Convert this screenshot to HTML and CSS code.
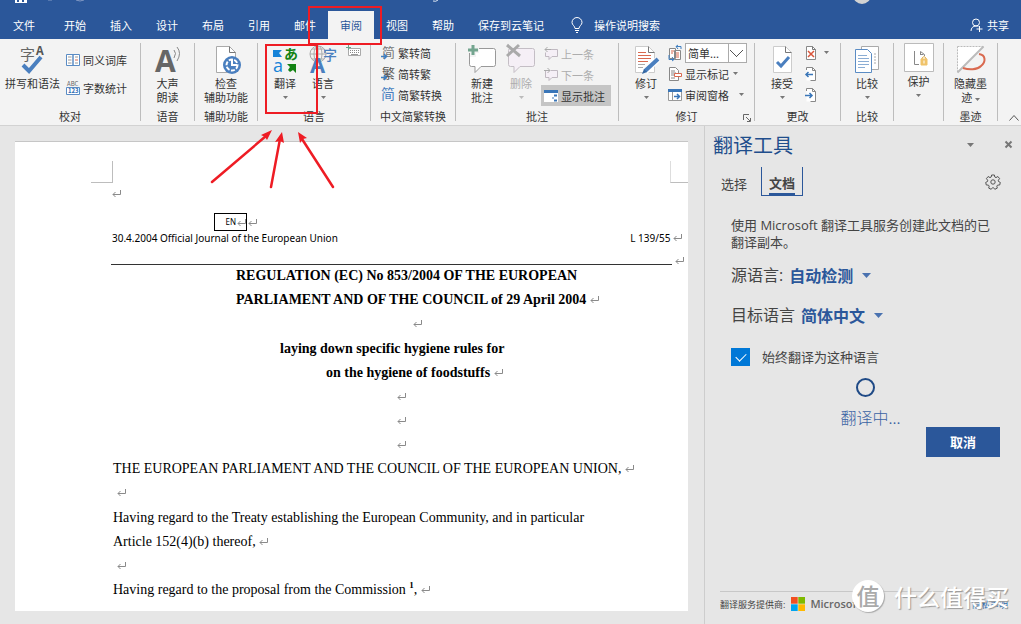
FILE: index.html
```html
<!DOCTYPE html>
<html lang="zh-CN">
<head>
<meta charset="utf-8">
<title>Word - 翻译工具</title>
<link rel="stylesheet" href="styles.css">
</head>
<body>
<svg class="defs" width="0" height="0" aria-hidden="true">
  <symbol id="ret" viewBox="0 0 9 9"><path d="M8.500 1v4.500H1M3.500 3 1 5.500 3.500 8" fill="none" stroke="#8a8a8a"/></symbol>
  <symbol id="caret" viewBox="0 0 5 3"><path d="M0 0h5L2.500 3z" fill="currentColor"/></symbol>
</svg>

<header class="titlebar">
  <svg class="quick" width="900" height="5" aria-hidden="true">
    <path d="M15 0h12v3H15z" fill="#fff"/><path d="M17 0h2v2h-2zM22 0h2v2h-2z" fill="#2b579a"/>
    <path d="M48 0h4M76 0q4 2 8 0" stroke="#8299c4" fill="none"/>
    <path d="M433 1q3 1 5-1" stroke="#dfe7f3" fill="none"/>
    <circle cx="862" cy="-5" r="9" fill="#d2d2d2"/>
  </svg>
  <nav class="tabs">
    <button class="tab file">文件</button>
    <button class="tab">开始</button>
    <button class="tab">插入</button>
    <button class="tab">设计</button>
    <button class="tab">布局</button>
    <button class="tab">引用</button>
    <button class="tab">邮件</button>
    <button class="tab active">审阅</button>
    <button class="tab">视图</button>
    <button class="tab">帮助</button>
    <button class="tab">保存到云笔记</button>
    <button class="tab tell"><svg width="12" height="16" viewBox="0 0 12 16" fill="none" stroke="#fff"><path d="M4 11.500C4 9 1 8 1 5.500a5 5 0 0 1 10 0C11 8 8 9 8 11.500zM4 13.500h4M5 15.500h2"/></svg>操作说明搜索</button>
  </nav>
  <button class="tab share"><svg width="13" height="14" viewBox="0 0 13 14" fill="none" stroke="#fff"><circle cx="6" cy="4.500" r="3.500"/><path d="M1 13c0-3 2-5 5-5 1 0 2 .3 2.500.700M9.500 8v6M6.500 11h6"/></svg>共享</button>
</header>

<section class="ribbon" aria-label="审阅">
  <div class="group g-proof">
    <div class="body">
      <button class="big"><svg class="ico" width="30" height="30" viewBox="0 0 30 30"><text x="2" y="15" font-size="15" fill="#666">字</text><text x="18" y="10" font-size="12" font-weight="700" fill="#555">A</text><path d="m5 20 6 6 12-14" fill="none" stroke="#4a7fbf" stroke-width="4"/></svg><span>拼写和语法</span></button>
      <div class="rows two">
        <button class="small"><svg width="14" height="14" viewBox="0 0 14 14"><path d="M.5 1.500H7v11H.5zM7 1.500h6.500v11H7z" fill="#fff" stroke="#5b8cc4"/><path d="M2 4h3.500M2 7h3.500M2 10h3.500" stroke="#999"/><path d="M9 4h3M9 10h3" stroke="#999"/><path d="M9 7h3" stroke="#d9694f"/></svg>同义词库</button>
        <button class="small"><svg width="14" height="14" viewBox="0 0 14 14"><text x="1" y="5" font-size="6" fill="#666">ABC</text><path d="M.5 6.500h13v7H.5z" fill="#fff" stroke="#5b8cc4"/><text x="2" y="12" font-size="6" font-weight="700" fill="#2f6cb3">123</text></svg>字数统计</button>
      </div>
    </div>
    <div class="label">校对</div>
  </div>
  <div class="group g-speech">
    <div class="body">
      <button class="big"><svg class="ico" width="30" height="30" viewBox="0 0 30 30"><text x="2" y="27" font-size="30" font-weight="700" fill="#666" class="latin">A</text><path d="M21 5q3 3 0 8M24 2q5 6 0 14" fill="none" stroke="#888"/></svg><span>大声<br>朗读</span></button>
    </div>
    <div class="label">语音</div>
  </div>
  <div class="group g-access">
    <div class="body">
      <button class="big"><svg class="ico" width="30" height="30" viewBox="0 0 30 30"><path d="M5.500 1.500h13l6 6v20h-19z" fill="#fff" stroke="#aaa"/><path d="M18.500 1.500v6h6" fill="none" stroke="#777"/><circle cx="21" cy="20" r="9" fill="#4a7fbf"/><circle cx="21" cy="20" r="5.500" fill="none" stroke="#fff" stroke-width="2" stroke-dasharray="4 1.500"/><path d="M21 14v6h5" fill="none" stroke="#fff" stroke-width="2"/></svg><span>检查<br>辅助功能</span></button>
    </div>
    <div class="label">辅助功能</div>
  </div>
  <div class="group g-lang">
    <div class="body">
      <button class="big"><svg class="ico" width="30" height="30" viewBox="0 0 30 30"><path d="M3 5h9L9 8l3 4H3z" fill="#1683d8"/><text x="14" y="14" font-size="14" font-weight="700" fill="#148314">あ</text><text x="3" y="27" font-size="18" fill="#1683d8" class="latin">a</text><path d="M17 19h9v9l-3-3-3 2-2-2 2-3z" fill="#148314"/></svg><span>翻译</span><svg class="caret" width="5" height="3"><use href="#caret"/></svg></button>
      <button class="big"><svg class="ico" width="30" height="30" viewBox="0 0 30 30"><g fill="none" stroke="#aaa"><circle cx="10" cy="9" r="8"/><ellipse cx="10" cy="9" rx="4" ry="8"/><path d="M2 9h16M4 4h12M4 14h12M10 1v16"/></g><text x="15" y="15" font-size="14" font-weight="500" fill="#4a7fbf">字</text><text x="2" y="28" font-size="22" font-weight="700" fill="#4a7fbf" class="latin">A</text></svg><span>语言</span><svg class="caret" width="5" height="3"><use href="#caret"/></svg></button>
      <button class="mini" aria-label="输入法"><svg width="15" height="12" viewBox="0 0 15 12"><path d="M2.500 3.500h12v7h-12z" fill="#fff" stroke="#aaa"/><path d="M4 5.500h9M4 7.500h9" stroke="#888" stroke-dasharray="1 1"/><path d="M5 9.500h7" stroke="#999"/><path d="M0 2.500h5M2.500 0v5" stroke="#6aa58c"/></svg></button>
    </div>
    <div class="label">语言</div>
  </div>
  <div class="group g-conv">
    <div class="body">
      <div class="rows">
        <button class="small"><svg width="14" height="15" viewBox="0 0 14 15"><text x="1" y="12" font-size="13" fill="#777">简</text><path d="M0 11.500h5M3 9l2.500 2.500L3 14" fill="none" stroke="#3f7fc1" stroke-width="1.500"/></svg>繁转简</button>
        <button class="small"><svg width="14" height="15" viewBox="0 0 14 15"><text x="1" y="12" font-size="13" fill="#555">繁</text><path d="M0 11.500h5M3 9l2.500 2.500L3 14" fill="none" stroke="#3f7fc1" stroke-width="1.500"/></svg>简转繁</button>
        <button class="small"><svg width="14" height="15" viewBox="0 0 14 15"><text x="0" y="12" font-size="14" fill="#4a7fbf">简</text></svg>简繁转换</button>
      </div>
    </div>
    <div class="label">中文简繁转换</div>
  </div>
  <div class="group g-comment">
    <div class="body">
      <button class="big"><svg class="ico" width="30" height="30" viewBox="0 0 30 30"><path d="M4.500 3.500h22q2 0 2 2v14q0 2-2 2H14l-6 6v-6H4.500q-2 0-2-2v-14q0-2 2-2z" fill="#fff" stroke="#999"/><path d="M0 5h12M6 0v12" stroke="#f3f3f3" stroke-width="6"/><path d="M1 5h10M6 0v10" stroke="#74a58f" stroke-width="3"/></svg><span>新建<br>批注</span></button>
      <button class="big off" disabled><svg class="ico" width="30" height="30" viewBox="0 0 30 30"><path d="M4.500 3.500h22q2 0 2 2v14q0 2-2 2H14l-6 6v-6H4.500q-2 0-2-2v-14q0-2 2-2z" fill="#f5eff6" stroke="#c4bec5"/><path d="m1 0 13 11M13 0 1 11" stroke="#aaa" stroke-width="3"/></svg><span>删除</span><svg class="caret" width="5" height="3"><use href="#caret"/></svg></button>
      <div class="rows">
        <button class="small off" disabled><svg width="14" height="15" viewBox="0 0 14 15"><path d="M4 3.500h9.500v7H8l-3 3v-3H1.500v-4" fill="#f5eff6" stroke="#c0b9c1"/><path d="M7 3.500H1M3.500 1 1 3.500 3.500 6" fill="none" stroke="#aaa"/></svg>上一条</button>
        <button class="small off" disabled><svg width="14" height="15" viewBox="0 0 14 15"><path d="M7 3.500h6.500v7H8l-3 3v-3H1.500v-7" fill="#f5eff6" stroke="#c0b9c1"/><path d="M0 3.500h6M3.500 1 6 3.500 3.500 6" fill="none" stroke="#aaa"/></svg>下一条</button>
        <button class="small pressed"><svg width="14" height="14" viewBox="0 0 14 14"><path d="M0 1h14v12H0z" fill="#fff"/><path d="M0 1h14v3H0z" fill="#3a76b8"/><path d="M10 6.500h3M10 11.500h3" stroke="#3a76b8" stroke-width="2"/><path d="M8 9h2" stroke="#3a76b8"/></svg>显示批注</button>
      </div>
    </div>
    <div class="label">批注</div>
  </div>
  <div class="group g-track">
    <div class="body">
      <button class="big"><svg class="ico" width="30" height="30" viewBox="0 0 30 30"><path d="M4.500 1.500h13l6 6v20h-19z" fill="#fff" stroke="#ccc"/><path d="M17.500 1.500v6h6" fill="none" stroke="#777"/><path d="M7 7.500h8M7 10.500h13M7 13.500h13M7 16.500h10" stroke="#d9694f"/><path d="M7 19.500h7M7 22.500h5" stroke="#aaa"/><path d="m14 27 13-13" stroke="#fff" stroke-width="6"/><path d="m14 26 13-12" stroke="#4a7fbf" stroke-width="4"/><path d="m11 29 2-5 3 3z" fill="#3568a3"/></svg><span>修订</span><svg class="caret" width="5" height="3"><use href="#caret"/></svg></button>
      <div class="rows">
        <div class="small combo"><svg width="14" height="16" viewBox="0 0 14 16"><path d="M1.500 3.500h6v10h-6zM6.500 5.500h6v9h-6z" fill="#fff" stroke="#888"/><path d="M3 6h3M3 8h2M8 8h3M8 10h3M8 12h3" stroke="#d9694f"/><path d="M13 4V1.500H8M10 0 8 1.500 10 4M1 10v4.500h5M4 12l2 2.500L4 16" fill="none" stroke="#3f7fc1"/></svg><select aria-label="显示以供审阅"><option>简单...</option></select></div>
        <button class="small"><svg width="14" height="14" viewBox="0 0 14 14"><path d="M1.500.5h6l3 3v10h-9z" fill="#fff" stroke="#888"/><path d="M3 4h4M3 6h5M3 8h3M3 11h4" stroke="#888"/><path d="M6.500 6.500h7v3h-7z" fill="#fff" stroke="#d9694f"/></svg>显示标记<svg class="caret" width="5" height="3"><use href="#caret"/></svg></button>
        <button class="small wide"><svg width="14" height="14" viewBox="0 0 14 14"><path d="M.5 2.500h13v10H.5z" fill="#fff" stroke="#999"/><path d="M0 1h14v3H0z" fill="#3a76b8"/><path d="M4.500 4v9" stroke="#999"/><path d="M6 8.500h5M9 6l2.500 2.500L9 11" fill="none" stroke="#3a76b8" stroke-width="1.500"/></svg>审阅窗格<svg class="caret" width="5" height="3"><use href="#caret"/></svg></button>
      </div>
    </div>
    <div class="label">修订<button class="launch" aria-label="修订选项"><svg width="8" height="8" viewBox="0 0 8 8" fill="none" stroke="#666"><path d="M.5 6V.5H6M3 3l4 4M7.500 4v3.500H4"/></svg></button></div>
  </div>
  <div class="group g-change">
    <div class="body">
      <button class="big"><svg class="ico" width="30" height="30" viewBox="0 0 30 30"><path d="M6.500 1.500h12l6 6v20h-18z" fill="#fff" stroke="#ccc"/><path d="M18.500 1.500v6h6" fill="none" stroke="#777"/><path d="m10 17 4 4 8-9" fill="none" stroke="#4a7fbf" stroke-width="3"/></svg><span>接受</span><svg class="caret" width="5" height="3"><use href="#caret"/></svg></button>
      <div class="rows">
        <button class="small reject" aria-label="拒绝"><svg width="12" height="14" viewBox="0 0 12 14"><path d="M1.500.5h6l3 3v10h-9z" fill="#fff" stroke="#888"/><path d="M7.500.5v3h3" fill="none" stroke="#777"/><path d="m3 5 6 6M9 5l-6 6" stroke="#d9553b" stroke-width="1.500"/></svg><svg class="caret" width="5" height="3"><use href="#caret"/></svg></button>
        <button class="small" aria-label="上一处"><svg width="12" height="14" viewBox="0 0 12 14"><path d="M1.500.5h6l3 3v10h-9z" fill="#fff"/><path d="M1.500 3V.5h6l3 3v10h-5M7.500.5v3h3" fill="none" stroke="#888"/><path d="M8 7.500H1M3.500 5 1 7.500 3.500 10" fill="none" stroke="#3a76b8" stroke-width="1.500"/></svg></button>
        <button class="small" aria-label="下一处"><svg width="12" height="14" viewBox="0 0 12 14"><path d="M1.500.5h6l3 3v10h-9z" fill="#fff"/><path d="M1.500 3V.5h6l3 3v10h-5M7.500.5v3h3" fill="none" stroke="#888"/><path d="M0 7.500h7M4.500 5 7 7.500 4.500 10" fill="none" stroke="#3a76b8" stroke-width="1.500"/></svg></button>
      </div>
    </div>
    <div class="label">更改</div>
  </div>
  <div class="group g-compare">
    <div class="body">
      <button class="big"><svg class="ico" width="30" height="30" viewBox="0 0 30 30"><path d="M9.500 1.500h17v23h-17z" fill="#fff" stroke="#aaa"/><path d="M24 9h-2M24 12h-2M24 15h-2M24 18h-2" stroke="#aaa"/><path d="M3.500 4.500h12l4 4v19h-16z" fill="#fff" stroke="#5b8cc4"/><path d="M6 10.500h9M6 13.500h11M6 16.500h11M6 19.500h11M6 22.500h7" stroke="#8badd4"/></svg><span>比较</span><svg class="caret" width="5" height="3"><use href="#caret"/></svg></button>
    </div>
    <div class="label">比较</div>
  </div>
  <div class="group g-protect">
    <div class="body">
      <button class="big"><svg class="frame" width="30" height="29" viewBox="0 0 30 29"><path d="M.5.5h29v28H.5z" fill="#fff" stroke="#bbb"/><path d="M10.500 8v13.500H15M16.500 12V8.500l4 3v1.500M16.500 11.500h3" fill="none" stroke="#888"/><path d="M17 16h6v6h-6z" fill="#f0c36a" stroke="#f0c36a"/><path d="M18 16v-1q2-3 4 0v1" fill="none" stroke="#e0ae4c"/><path d="M20 17.500v3" stroke="#fff"/></svg><span>保护</span><svg class="caret" width="5" height="3"><use href="#caret"/></svg></button>
    </div>
  </div>
  <div class="group g-ink">
    <div class="body">
      <button class="big"><svg class="ico" width="30" height="30" viewBox="0 0 30 30"><path d="M1.500 1.500h26l-26 26z" fill="#fff" stroke="#bbb" stroke-dasharray="2 1"/><path d="M27.500 1.500 1.500 27.500" stroke="#bbb" stroke-width="2"/><path d="M23 9c7 1 7 8 2 12-4 4-12 4-18 2" fill="none" stroke="#d9694f" stroke-width="2"/></svg><span>隐藏墨<br>迹 <svg class="inline" width="5" height="3"><use href="#caret"/></svg></span></button>
    </div>
    <div class="label">墨迹</div>
  </div>
  <button class="collapse" aria-label="折叠功能区"><svg width="10" height="6" viewBox="0 0 10 6"><path d="m.5 5.500 4.500-5 4.500 5" fill="none" stroke="#555"/></svg></button>
</section>

<main class="work">
  <div class="canvas">
    <article class="page">
      <div class="corners"><span class="crop left"></span><span class="crop right"></span></div>
      <p class="blank"><svg class="ret" width="9" height="9"><use href="#ret"/></svg></p>
      <div class="lang-row"><span class="lang">EN<svg width="9" height="9"><use href="#ret"/></svg></span><svg width="9" height="9"><use href="#ret"/></svg></div>
      <div class="running"><span>30.4.2004 Official Journal of the European Union</span><span>L 139/55 <svg class="ret" width="9" height="9"><use href="#ret"/></svg></span></div>
      <div class="rule"><hr><svg width="9" height="9"><use href="#ret"/></svg></div>
      <div class="text">
        <h1 class="in-a">REGULATION (EC) No 853/2004 OF THE EUROPEAN</h1>
        <h1 class="in-a">PARLIAMENT AND OF THE COUNCIL of 29 April 2004 <svg class="ret" width="9" height="9"><use href="#ret"/></svg></h1>
        <p class="in-e end"><svg class="ret" width="9" height="9"><use href="#ret"/></svg></p>
        <h2 class="in-b">laying down specific hygiene rules for</h2>
        <h2 class="in-c">on the hygiene of foodstuffs <svg class="ret" width="9" height="9"><use href="#ret"/></svg></h2>
        <p class="in-d"><svg class="ret" width="9" height="9"><use href="#ret"/></svg></p>
        <p class="in-d"><svg class="ret" width="9" height="9"><use href="#ret"/></svg></p>
        <p class="in-d"><svg class="ret" width="9" height="9"><use href="#ret"/></svg></p>
        <p>THE EUROPEAN PARLIAMENT AND THE COUNCIL OF THE EUROPEAN UNION, <svg class="ret" width="9" height="9"><use href="#ret"/></svg></p>
        <p class="end">&nbsp;<svg class="ret" width="9" height="9"><use href="#ret"/></svg></p>
        <p>Having regard to the Treaty establishing the European Community, and in particular<br>Article 152(4)(b) thereof, <svg class="ret" width="9" height="9"><use href="#ret"/></svg></p>
        <p>&nbsp;<svg class="ret" width="9" height="9"><use href="#ret"/></svg></p>
        <p>Having regard to the proposal from the Commission <sup>1</sup>, <svg class="ret" width="9" height="9"><use href="#ret"/></svg></p>
      </div>
    </article>
  </div>

  <aside class="pane">
    <div class="pane-head">
      <h2>翻译工具</h2>
      <button aria-label="任务窗格选项"><svg width="7" height="4" viewBox="0 0 7 4"><path d="M0 0h7L3.500 4z" fill="#777"/></svg></button>
      <button aria-label="关闭"><svg width="7" height="7" viewBox="0 0 7 7"><path d="m.5.5 6 6M6.500.5l-6 6" stroke="#777" stroke-width="2"/></svg></button>
    </div>
    <div class="pane-tabs">
      <button class="ptab">选择</button>
      <button class="ptab on"><span>文档</span></button>
      <button class="gear" aria-label="设置"><svg width="16" height="16" viewBox="0 0 16 16" fill="none" stroke="#555"><path d="M6.600 1h2.800l.4 2 1.200.600 1.900-1.100 1.700 2.200-1.300 1.500.2 1.300 1.800.9-.6 2.600-2.100.1-.8 1 .5 2-2.500 1.200-1.300-1.600H7.500l-1.300 1.600-2.500-1.200.5-2-.8-1-2.100-.1-.6-2.600 1.800-.9.2-1.300L1.400 4.700l1.700-2.200L5 3.600 6.200 3z"/><circle cx="8" cy="8" r="2.200"/></svg></button>
    </div>
    <div class="pane-body">
      <p class="intro">使用 Microsoft 翻译工具服务创建此文档的已翻译副本。</p>
      <div class="field"><label for="src">源语言:</label><select id="src"><option>自动检测</option></select><svg width="9" height="5" viewBox="0 0 9 5"><path d="M0 0h9L4.500 5z" fill="#4a72b0"/></svg></div>
      <div class="field"><label for="dst">目标语言</label><select id="dst"><option>简体中文</option></select><svg width="9" height="5" viewBox="0 0 9 5"><path d="M0 0h9L4.500 5z" fill="#4a72b0"/></svg></div>
      <label class="check"><input type="checkbox" checked>始终翻译为这种语言</label>
      <div class="busy"><i class="ring"></i><span>翻译中...</span></div>
      <button class="cancel">取消</button>
    </div>
    <footer class="pane-foot">
      <span>翻译服务提供商:</span>
      <svg width="14" height="14" viewBox="0 0 14 14"><path d="M0 0h6.700v6.700H0z" fill="#f25022"/><path d="M7.300 0H14v6.700H7.300z" fill="#7fba00"/><path d="M0 7.300h6.700V14H0z" fill="#00a4ef"/><path d="M7.300 7.300H14V14H7.300z" fill="#ffb900"/></svg>
      <b>Microsoft</b>
      <a href="#privacy">隐私声明</a>
    </footer>
    <div class="mark"><span class="seal">值</span><span>什么值得买</span></div>
  </aside>
</main>

<svg class="notes" width="400" height="200" viewBox="0 0 400 200" fill="none" stroke="#ee1c24" stroke-width="2" aria-hidden="true">
  <path d="M309 7h72v37h-72zM266 45h51v68h-51z"/>
  <g stroke-width="2.500" stroke-linecap="round"><path d="m212 182 54-46M271 187l9-48M333 187l-31-48"/></g>
  <g fill="#ee1c24" stroke="none"><path d="m272 130-5 10-2-3-4-2zM282 132l2 11-4-2-5 1zM298 132l9 6-4 1-3 4z"/></g>
</svg>
</body>
</html>
```
FILE: styles.css
```css
* { box-sizing: border-box; }
body {
  margin: 0;
  height: 100vh;
  display: flex;
  flex-direction: column;
  overflow: hidden;
  background: #e6e6e6;
  color: #333;
  font: 11px/14px "Noto Sans CJK SC", sans-serif;
}
button {
  margin: 0; padding: 0; border: 0;
  background: none; color: inherit; font: inherit;
  white-space: nowrap;
}
svg { display: block; flex: none; overflow: visible; }
h1, h2, p { margin: 0; }
.defs, .notes { position: absolute; left: 0; top: 0; pointer-events: none; }
.latin { font-family: "Open Sans", sans-serif; }

/* title bar and tabs */
.titlebar {
  position: relative;
  display: flex;
  align-items: flex-end;
  justify-content: space-between;
  height: 39px;
  flex: none;
  background: #2b579a;
  color: #fff;
}
.quick { position: absolute; left: 0; top: 0; overflow: hidden; }
.tabs { display: flex; padding-left: 1px; }
.tab { display: flex; align-items: center; height: 28px; padding: 0 12px; }
.file { margin-right: 5px; }
.active { background: #f3f3f3; color: #2b579a; }
.tell { gap: 11px; padding-left: 15px; }
.share { gap: 4px; }

/* ribbon */
.ribbon {
  display: flex;
  flex: none;
  height: 87px;
  padding-top: 4px;
  background: #f3f3f3;
  border-bottom: 1px solid #d2d2d2;
}
.group { height: 78px; border-right: 1px solid #bdbdbd; flex: none; }
.body { display: flex; height: 66px; }
.label { position: relative; text-align: center; }
.launch { position: absolute; right: 3px; top: 5px; }
.big { display: flex; flex-direction: column; align-items: center; line-height: 14px; }
.ico { margin: 2px 0 1px; }
.frame { margin-bottom: 2px; }
.caret { color: #777; }
.big .caret { margin-top: 6px; }
.inline { display: inline-block; vertical-align: middle; color: #777; }
.rows { display: flex; flex-direction: column; }
.small { display: flex; align-items: center; gap: 3px; height: 21px; }
.small .caret { margin-left: 1px; }
.wide .caret { margin-left: 7px; }
.two { padding-top: 3px; }
.two .small { height: 28px; }
.off { color: #adadad; }
.off .caret { color: #bbb; }
.pressed { background: #c5c5c5; }
.mini { align-self: flex-start; padding-top: 2px; }

.g-proof { width: 141px; }
.g-proof .body { padding-left: 5px; gap: 6px; }
.g-speech { width: 54px; }
.g-access { width: 63px; }
.g-speech .body, .g-access .body, .g-compare .body, .g-protect .body, .g-ink .body { justify-content: center; }
.g-lang { width: 113px; }
.g-lang .body { padding-left: 12px; gap: 8px; }
.g-conv { width: 85px; }
.g-conv .body { padding-left: 10px; }
.g-conv .rows, .g-track .rows { margin-top: -1px; }
.g-comment { width: 163px; }
.g-comment .body { padding-left: 11px; gap: 9px; }
.g-comment .rows { margin-left: -4px; }
.g-comment .small { padding: 0 6px 0 3px; }
.g-track { width: 136px; }
.g-track .body { padding-left: 12px; gap: 7px; }
.combo select {
  width: 62px;
  height: 20px;
  padding: 0 2px;
  border: 1px solid #ababab;
  border-radius: 0;
  appearance: none;
  color: #333;
  font: inherit;
  background:
    linear-gradient(45deg, transparent 44%, #555 44%, #555 56%, transparent 56%) 44px 6px / 7px 7px no-repeat,
    linear-gradient(-45deg, transparent 44%, #555 44%, #555 56%, transparent 56%) 50px 6px / 7px 7px no-repeat,
    linear-gradient(#ababab, #ababab) 42px 0 / 1px 20px no-repeat,
    #fff;
}
.g-change { width: 86px; }
.g-change .body { padding-left: 12px; gap: 8px; }
.g-change .rows { margin-top: -1px; }
.reject .caret { margin-left: 4px; }
.g-compare { width: 53px; }
.g-protect { width: 50px; }
.g-ink { width: 54px; }
.collapse { margin-left: auto; align-self: flex-end; padding: 0 2px 4px; }

/* document */
.work { display: flex; flex: 1; min-height: 0; }
.canvas { flex: 1; min-width: 0; padding: 15px 16px 13px 15px; }
.page {
  height: 100%;
  overflow: hidden;
  border-top: 1px solid #c6c6c6;
  background: #fff;
  color: #000;
}
.corners { display: flex; justify-content: space-between; padding-top: 19px; }
.crop { width: 22px; height: 22px; border-bottom: 1px solid #bdbdbd; }
.left { margin-left: 76px; border-right: 1px solid #bdbdbd; }
.right { width: 18px; border-left: 1px solid #ddd; }
.ret { display: inline-block; vertical-align: baseline; }
.blank { padding: 3px 0 0 97px; height: 30px; }
.lang-row { display: flex; align-items: center; padding-left: 199px; gap: 1px; height: 18px; }
.lang {
  display: flex;
  align-items: center;
  justify-content: flex-end;
  gap: 1px;
  width: 33px;
  height: 18px;
  border: 1px solid #000;
  font: 8px/12px "Noto Sans", sans-serif;
}
.running {
  display: flex;
  justify-content: space-between;
  padding: 0 6px 0 97px;
  font: 10px/14px "Noto Sans", sans-serif;
}
.rule { display: flex; align-items: flex-start; gap: 3px; padding: 11px 4px 0 96px; }
.rule hr { flex: 1; height: 1px; margin: 8px 0 0; border: 0; background: #333; }
.text { margin-top: -1px; padding-left: 98px; font: 14px/24px "Liberation Serif", serif; white-space: nowrap; }
.text h1, .text h2 { font-size: 14px; font-weight: 700; }
.end { margin-bottom: 1px; }
.in-a { padding-left: 123px; }
.in-b { padding-left: 167px; }
.in-c { padding-left: 213px; }
.in-d { padding-left: 284px; }
.in-e { padding-left: 300px; }
.text sup { font-size: 9px; font-weight: 700; line-height: 0; }

/* translator pane */
.pane {
  position: relative;
  display: flex;
  flex-direction: column;
  width: 317px;
  flex: none;
  border-left: 1px solid #cdcdcd;
  color: #444;
  font: 13px/17px "Open Sans", "Noto Sans CJK SC", sans-serif;
}
.pane-head { display: flex; align-items: center; gap: 31px; height: 37px; padding: 0 9px 0 8px; }
.pane-head h2 { flex: 1; color: #1f4e8c; font: 20px/24px "Noto Sans CJK SC", sans-serif; }
.pane-tabs { display: flex; align-items: stretch; height: 33px; padding: 4px 20px 0 16px; }
.ptab { padding-top: 6px; }
.on { margin-left: 14px; padding: 7px 7px 0; border: 1px solid #2b579a; border-top: 0; font-weight: 700; }
.on span { display: block; height: 20px; border-bottom: 2px solid #2b579a; }
.gear { margin-left: auto; align-self: center; }
.pane-body { display: flex; flex-direction: column; flex: 1; padding: 21px 21px 0 26px; }
.field { display: flex; align-items: center; height: 24px; margin-top: 16px; font-size: 16px; }
.intro + .field { margin-top: 12px; }
.field select {
  margin: 0 8px 0 6px;
  padding: 0;
  border: 0;
  appearance: none;
  background: none;
  color: #2b579a;
  font: 700 16px/24px "Noto Sans CJK SC", sans-serif;
}
.check { display: flex; align-items: center; gap: 12px; margin-top: 21px; }
.check input {
  width: 19px;
  height: 18px;
  margin: 0;
  appearance: none;
  background: #0078d7;
  display: grid;
  place-items: center;
}
.check input::after {
  content: "";
  width: 9px;
  height: 5px;
  margin-bottom: 3px;
  border: solid #fff;
  border-width: 0 0 1px 1px;
  transform: rotate(-45deg);
}
.busy { display: flex; flex-direction: column; align-items: center; gap: 10px; margin-top: 12px; color: #3a62a3; font: 300 16px/20px "Noto Sans CJK SC", sans-serif; }
.busy span { padding-left: 10px; }
.ring { width: 19px; height: 19px; border: 2px solid #1f4a86; border-radius: 50%; }
.cancel { align-self: flex-end; width: 74px; height: 30px; background: #2b579a; color: #fff; font-weight: 700; }
.pane-foot {
  display: flex;
  align-items: center;
  gap: 6px;
  height: 33px;
  margin: 0 13px 0 15px;
  padding-bottom: 8px;
  border-top: 1px solid #c8c8c8;
  font-size: 9px;
}
.pane-foot b { margin-left: -1px; font: 600 11px/14px "Open Sans", sans-serif; color: #666; }
.pane-foot a { margin-left: auto; color: #2b6cb0; text-decoration: none; }
.mark {
  position: absolute;
  right: 12px;
  bottom: 12px;
  display: flex;
  align-items: center;
  gap: 10px;
  color: #fff;
  font: 500 23px/30px "Noto Sans CJK SC", sans-serif;
  text-shadow: 1px 1px 1px #999;
}
.seal { width: 32px; height: 32px; border-radius: 50%; background: #fff; box-shadow: 1px 1px 1px #aaa; color: #aaa; text-align: center; text-shadow: none; }
```
